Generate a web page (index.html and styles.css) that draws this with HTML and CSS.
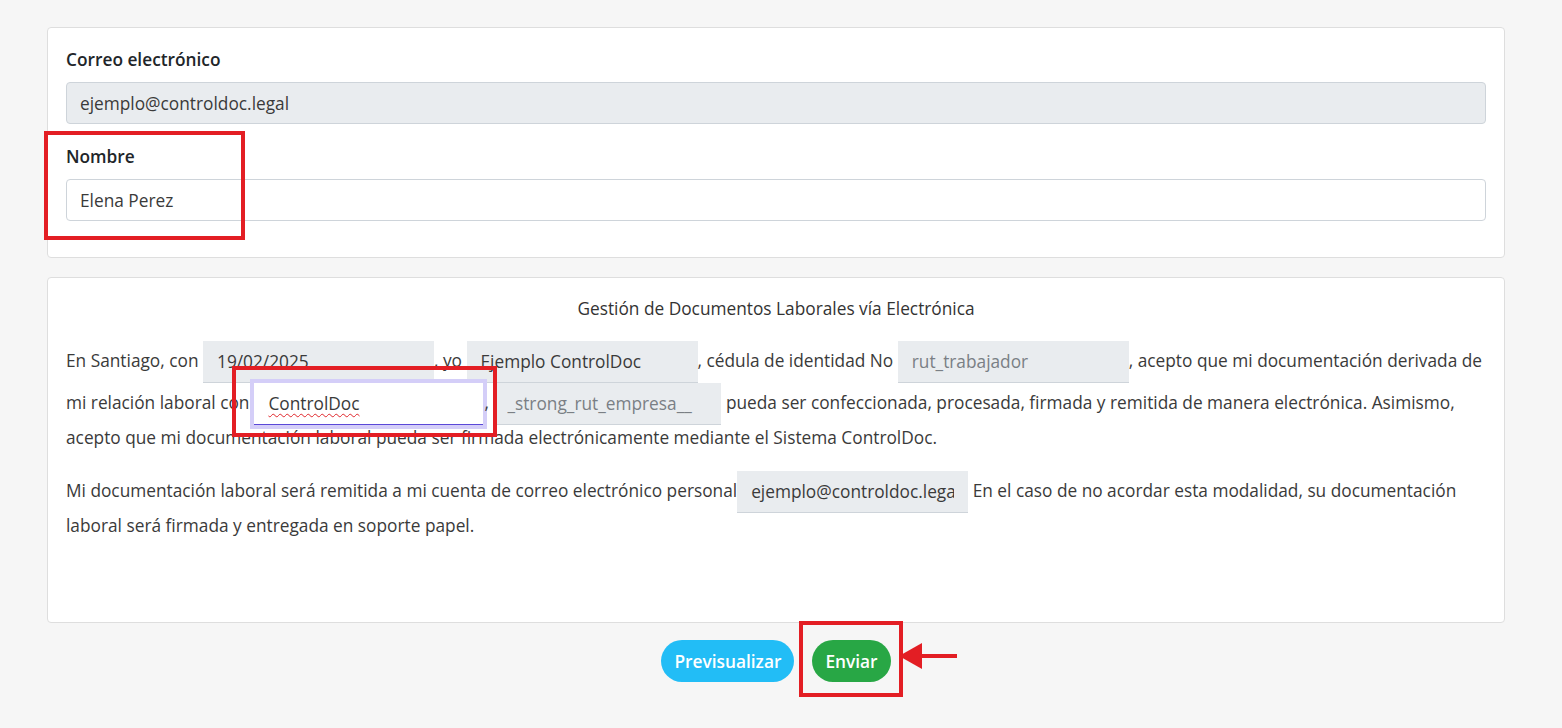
FILE: index.html
```html
<!DOCTYPE html>
<html lang="es">
<head>
    <meta charset="UTF-8">
    <meta name="viewport" content="width=device-width, initial-scale=1.0">
    <title>Gestión de Documentos Laborales</title>
    <link rel="stylesheet" href="styles.css">
</head>
<body>
    <main class="page">
        <section class="card card-user">
            <div class="form-group">
                <label class="form-label" for="email">Correo electrónico</label>
                <input class="form-control" id="email" type="text" value="ejemplo@controldoc.legal" readonly>
            </div>
            <div class="form-group">
                <label class="form-label" for="nombre">Nombre</label>
                <input class="form-control form-control-white" id="nombre" type="text" value="Elena Perez">
            </div>
        </section>

        <section class="card card-doc">
            <h2 class="doc-title">Gestión de Documentos Laborales vía Electrónica</h2>
            <p class="doc-text">En Santiago, con <input class="field" type="text" value="19/02/2025">, yo <input class="field" type="text" value="Ejemplo ControlDoc">, cédula de identidad No <input class="field" type="text" placeholder="rut_trabajador">, acepto que mi documentación derivada de mi relación laboral con<span class="field field-focus" contenteditable="true"><span class="misspelled">ControlDoc</span></span>, <input class="field field-narrow" type="text" placeholder="_strong_rut_empresa__"> pueda ser confeccionada, procesada, firmada y remitida de manera electrónica. Asimismo, acepto que mi documentación laboral pueda ser firmada electrónicamente mediante el Sistema ControlDoc.</p>
            <p class="doc-text">Mi documentación laboral será remitida a mi cuenta de correo electrónico personal<input class="field" type="text" value="ejemplo@controldoc.legal"> En el caso de no acordar esta modalidad, su documentación laboral será firmada y entregada en soporte papel.</p>
        </section>

        <div class="actions">
            <button class="btn btn-info" type="button">Previsualizar</button>
            <button class="btn btn-success" type="button">Enviar</button>
        </div>
    </main>

    <!-- annotation marks -->
    <div class="mark mark-nombre"></div>
    <div class="mark mark-empresa"></div>
    <div class="mark mark-enviar"></div>
    <svg class="mark-arrow" width="62" height="30" viewBox="0 0 62 30">
        <polygon points="0,14 23,1 23,27" fill="#e31e24"/>
        <rect x="20" y="12" width="38" height="4" fill="#e31e24"/>
    </svg>
</body>
</html>
```

FILE: styles.css
```css
body {
    font-family: "Open Sans", "Lato", sans-serif;
    font-size: 17.3px;
    color: #3a3a3a;
    margin: 0;
    background-color: #f6f6f6;
    position: relative;
    min-height: 728px;
}
.page {
    margin: 0 57px 0 47px;
    padding-top: 27px;
}
.card {
    background-color: white;
    border: 1px solid #dedede;
    border-radius: 4px;
}
.card-user {
    padding: 20px 18px 15px 18px;
}
.form-group {
    margin-bottom: 21px;
}
.form-label {
    display: block;
    font-weight: 600;
    color: #212529;
    line-height: 24px;
    margin-bottom: 10px;
}
.form-control {
    display: block;
    box-sizing: border-box;
    width: 100%;
    height: 42px;
    padding: 0 13px;
    font-family: inherit;
    font-size: 17.3px;
    color: #3a3a3a;
    background-color: #e9ecef;
    border: 1px solid #ced4da;
    border-radius: 4px;
    outline: none;
}
.form-control-white {
    background-color: white;
}
.card-doc {
    margin-top: 19px;
    padding: 19px 18px 63px 18px;
}
.doc-title {
    font-size: 17.3px;
    font-weight: normal;
    text-align: center;
    color: #333;
    line-height: 24px;
    margin: 0 0 20px 0;
}
.doc-text {
    line-height: 26px;
    margin: 0 0 20px 0;
}
.field {
    display: inline-block;
    box-sizing: border-box;
    width: 231px;
    height: 42px;
    padding: 0 14px;
    vertical-align: middle;
    font-family: inherit;
    font-size: 17.3px;
    line-height: 41px;
    color: #3a3a3a;
    background-color: #e9ecef;
    border: none;
    border-bottom: 1px solid #ced4da;
    border-radius: 0;
    outline: none;
}
.field::placeholder {
    color: #7a7f85;
}
.field-narrow {
    width: 228px;
}
.field-focus {
    width: 229px;
    margin: 0 1px 0 5px;
    background-color: white;
    border-bottom: 1px solid #5a48d8;
    box-shadow: 0 0 0 4px #d4cef8;
    white-space: nowrap;
}
.misspelled {
    text-decoration: underline wavy #e0262b;
    text-decoration-thickness: 1px;
    text-underline-offset: 3px;
}
.actions {
    display: flex;
    justify-content: center;
    gap: 18px;
    margin-top: 17px;
}
.btn {
    height: 42px;
    padding: 0 13px;
    border: none;
    border-radius: 21px;
    color: white;
    font-family: inherit;
    font-size: 17.3px;
    font-weight: 600;
    cursor: pointer;
}
.btn-info {
    background-color: #22bdf6;
}
.btn-success {
    background-color: #28a745;
}
.mark {
    position: absolute;
    border: 4px solid #e31e24;
    box-sizing: border-box;
}
.mark-nombre {
    left: 44px;
    top: 131px;
    width: 201px;
    height: 109px;
}
.mark-empresa {
    left: 232px;
    top: 366px;
    width: 265px;
    height: 71px;
}
.mark-enviar {
    left: 799px;
    top: 621px;
    width: 104px;
    height: 76px;
}
.mark-arrow {
    position: absolute;
    left: 899px;
    top: 642px;
}
```
